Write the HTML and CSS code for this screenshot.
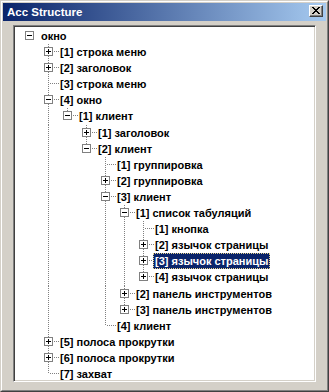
FILE: index.html
```html
<!DOCTYPE html>
<html>
<head>
<meta charset="utf-8">
<link rel="stylesheet" href="styles.css">
</head>
<body>
<div class="window">
  <div class="frame">
    <div class="titlebar">
      <span class="title">Acc Structure</span>
      <span class="close">
        <svg width="8" height="7" viewBox="0 0 8 7" shape-rendering="crispEdges"><path d="M0 0h2v1h-2zM6 0h2v1h-2zM1 1h2v1h-2zM5 1h2v1h-2zM2 2h4v1h-4zM3 3h2v1h-2zM2 4h4v1h-4zM1 5h2v1h-2zM5 5h2v1h-2zM0 6h2v1h-2zM6 6h2v1h-2z" fill="#000"/></svg>
      </span>
    </div>
    <div class="tree">
      <div class="row"><span class="g"><span class="box minus"></span></span><span class="label">окно</span></div>
      <div class="row"><span class="g"></span><span class="g t"><span class="box plus"></span></span><span class="label">[1] строка меню</span></div>
      <div class="row"><span class="g"></span><span class="g t"><span class="box plus"></span></span><span class="label">[2] заголовок</span></div>
      <div class="row"><span class="g"></span><span class="g t"></span><span class="label">[3] строка меню</span></div>
      <div class="row"><span class="g"></span><span class="g t"><span class="box minus"></span></span><span class="label">[4] окно</span></div>
      <div class="row"><span class="g"></span><span class="g v"></span><span class="g l"><span class="box minus"></span></span><span class="label">[1] клиент</span></div>
      <div class="row"><span class="g"></span><span class="g v"></span><span class="g"></span><span class="g t"><span class="box plus"></span></span><span class="label">[1] заголовок</span></div>
      <div class="row"><span class="g"></span><span class="g v"></span><span class="g"></span><span class="g l"><span class="box minus"></span></span><span class="label">[2] клиент</span></div>
      <div class="row"><span class="g"></span><span class="g v"></span><span class="g"></span><span class="g"></span><span class="g t"></span><span class="label">[1] группировка</span></div>
      <div class="row"><span class="g"></span><span class="g v"></span><span class="g"></span><span class="g"></span><span class="g t"><span class="box plus"></span></span><span class="label">[2] группировка</span></div>
      <div class="row"><span class="g"></span><span class="g v"></span><span class="g"></span><span class="g"></span><span class="g t"><span class="box minus"></span></span><span class="label">[3] клиент</span></div>
      <div class="row"><span class="g"></span><span class="g v"></span><span class="g"></span><span class="g"></span><span class="g v"></span><span class="g t"><span class="box minus"></span></span><span class="label">[1] список табуляций</span></div>
      <div class="row"><span class="g"></span><span class="g v"></span><span class="g"></span><span class="g"></span><span class="g v"></span><span class="g v"></span><span class="g t"></span><span class="label">[1] кнопка</span></div>
      <div class="row"><span class="g"></span><span class="g v"></span><span class="g"></span><span class="g"></span><span class="g v"></span><span class="g v"></span><span class="g t"><span class="box plus"></span></span><span class="label">[2] язычок страницы</span></div>
      <div class="row"><span class="g"></span><span class="g v"></span><span class="g"></span><span class="g"></span><span class="g v"></span><span class="g v"></span><span class="g t"><span class="box plus"></span></span><span class="label selected">[3] язычок страницы</span></div>
      <div class="row"><span class="g"></span><span class="g v"></span><span class="g"></span><span class="g"></span><span class="g v"></span><span class="g v"></span><span class="g l"><span class="box plus"></span></span><span class="label">[4] язычок страницы</span></div>
      <div class="row"><span class="g"></span><span class="g v"></span><span class="g"></span><span class="g"></span><span class="g v"></span><span class="g t"><span class="box plus"></span></span><span class="label">[2] панель инструментов</span></div>
      <div class="row"><span class="g"></span><span class="g v"></span><span class="g"></span><span class="g"></span><span class="g v"></span><span class="g l"><span class="box plus"></span></span><span class="label">[3] панель инструментов</span></div>
      <div class="row"><span class="g"></span><span class="g v"></span><span class="g"></span><span class="g"></span><span class="g l"></span><span class="label">[4] клиент</span></div>
      <div class="row"><span class="g"></span><span class="g t"><span class="box plus"></span></span><span class="label">[5] полоса прокрутки</span></div>
      <div class="row"><span class="g"></span><span class="g t"><span class="box plus"></span></span><span class="label">[6] полоса прокрутки</span></div>
      <div class="row"><span class="g"></span><span class="g l"></span><span class="label">[7] захват</span></div>
    </div>
  </div>
</div>
</body>
</html>
```
FILE: styles.css
```css
html, body {
  margin: 0;
  padding: 0;
  background: #d4d0c8;
}
.window {
  box-sizing: border-box;
  width: 329px;
  height: 392px;
  border: 1px solid;
  border-color: #d4d0c8 #404040 #404040 #d4d0c8;
  background: #d4d0c8;
  font-family: "Liberation Sans", Arial, sans-serif;
}
.frame {
  box-sizing: border-box;
  height: 100%;
  border: 1px solid;
  border-color: #ffffff #808080 #808080 #ffffff;
  padding: 1px;
  display: flex;
  flex-direction: column;
}
.titlebar {
  height: 18px;
  flex: none;
  display: flex;
  align-items: center;
  justify-content: space-between;
  padding: 0 3px 0 4px;
  background: linear-gradient(to right, #0a246a, #a6caf0);
}
.title {
  color: #fff;
  font-weight: bold;
  font-size: 11.5px;
  line-height: 14px;
  margin-top: -1px;
}
.close {
  box-sizing: border-box;
  width: 14px;
  height: 12px;
  margin-top: -2px;
  background: #d4d0c8;
  border: 1px solid;
  border-color: #ffffff #404040 #404040 #ffffff;
  box-shadow: inset -1px -1px #808080;
  display: flex;
  align-items: center;
  justify-content: center;
  padding: 0 1px 1px 0;
}
.close svg {
  display: block;
}
.tree {
  box-sizing: border-box;
  height: 357px;
  margin: 4px 10px 7px 10px;
  background: #fff;
  border: 1px solid;
  border-color: #808080 #ffffff #ffffff #808080;
  box-shadow: inset 1px 1px #404040, inset -1px -1px #d4d0c8;
  padding: 2px 2px 0 2px;
  overflow: hidden;
}
.row {
  display: flex;
  height: 16.1px;
  align-items: flex-start;
}
.g {
  position: relative;
  flex: none;
  width: 19px;
  height: 16px;
  box-sizing: border-box;
  padding: 3px 0 0 9px;
}
.g.v::before,
.g.t::before,
.g.l::before {
  content: "";
  position: absolute;
  left: 13px;
  top: 0;
  width: 1px;
  height: 17px;
  background: repeating-linear-gradient(to bottom, #808080 0 1px, transparent 1px 2px);
}
.g.l::before {
  height: 8px;
}
.g.t::after,
.g.l::after {
  content: "";
  position: absolute;
  left: 15px;
  top: 7px;
  width: 9px;
  height: 1px;
  background: repeating-linear-gradient(to right, #808080 0 1px, transparent 1px 2px);
}
.box {
  display: block;
  position: relative;
  z-index: 1;
  box-sizing: border-box;
  width: 9px;
  height: 9px;
  border: 1px solid #808080;
  background: #fff;
}
.box::before {
  content: "";
  position: absolute;
  left: 1px;
  top: 3px;
  width: 5px;
  height: 1px;
  background: #000;
}
.box.plus::after {
  content: "";
  position: absolute;
  left: 3px;
  top: 1px;
  width: 1px;
  height: 5px;
  background: #000;
}
.label {
  position: relative;
  z-index: 2;
  margin-left: 4px;
  padding: 0 1px;
  border: 1px solid transparent;
  font-weight: bold;
  font-size: 11px;
  line-height: 14px;
  color: #000;
  white-space: nowrap;
}
.label.selected {
  background: #0a246a;
  color: #fff;
  border: 1px dotted #e6d38c;
}
```
